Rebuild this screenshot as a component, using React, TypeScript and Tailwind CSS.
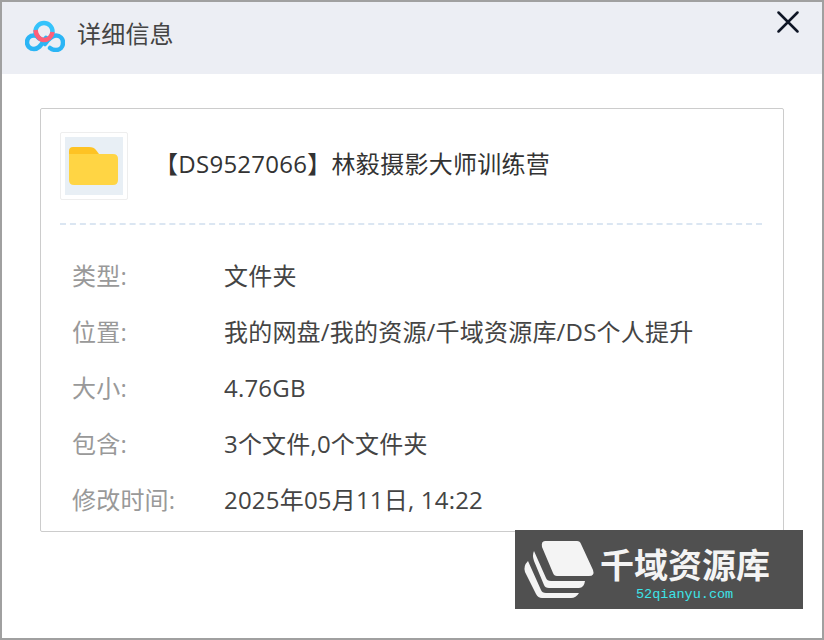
const font = '[font-family:"Open_Sans","Noto_Sans_CJK_SC",sans-serif]';

const rows = [
  { label: '类型:', value: '文件夹' },
  { label: '位置:', value: '我的网盘/我的资源/千域资源库/DS个人提升' },
  { label: '大小:', value: '4.76GB' },
  { label: '包含:', value: '3个文件,0个文件夹' },
  { label: '修改时间:', value: '2025年05月11日, 14:22' },
];

function CloudLogo() {
  return (
    <svg width="40" height="32" viewBox="0 0 40 32" fill="none" className="mb-[4px]">
      <circle cx="19" cy="11.500" r="8.500" stroke="#35c3fb" strokeWidth="4.500" />
      <path d="M21 18 C17 23 15 29 9 29 C5 29 2 26 2 22.500 C2 18 5 15.500 9 15.500 C11 15.500 13 16.500 14 18" stroke="#2bb5f5" strokeWidth="4.500" strokeLinecap="round" />
      <path d="M20 24 C23 20 26 15.500 31 15.500 C35 15.500 38 18.500 38 22.500 C38 27 35 30 31 30 C29 30 27 29.500 25 28" stroke="#2bb5f5" strokeWidth="4.500" strokeLinecap="round" />
      <path d="M10.500 10 C11 16 15 20 19 20 C23 20 27 17 27.500 12" stroke="#ff5f78" strokeWidth="4.500" />
    </svg>
  );
}

function FolderIcon() {
  return (
    <svg width="49" height="38" viewBox="0 0 49 38" className="mr-[2px]">
      <path d="M0 4 Q0 0 4 0 H20 Q25 0 27 3 L30 7 H0 Z" fill="#fec324" />
      <path d="M0 7 H44 Q49 7 49 12 V33 Q49 38 44 38 H5 Q0 38 0 33 Z" fill="#ffd544" />
    </svg>
  );
}

function Watermark() {
  return (
    <div className="absolute left-[513px] top-[528px] flex h-[79px] w-[288px] bg-[#505050]">
      <svg width="85" height="79" viewBox="0 0 85 79" className="shrink-0">
        <path d="M30 11 H62 Q65 11 66 14 L78 40 Q80 46 74 46 H42 Q39 46 38 43 L27 17 Q26 11 30 11 Z" fill="#f4f4f4" />
        <path d="M19 21 L31 48 Q32 51 36 51 H70 Q69 58 64 58 H34 Q30 58 29 55 L19 31 Q17 25 19 21 Z" fill="#f4f4f4" />
        <path d="M13 31 L26 60 Q27 63 31 63 H64 Q61 68 56 68 H27 Q23 68 21 64 L10 42 Q8 36 13 31 Z" fill="#f4f4f4" />
      </svg>
      <div className="flex flex-col">
        <div className="mt-[14px] font-['Noto_Sans_CJK_SC',sans-serif] text-[34px] leading-[40px] font-bold whitespace-nowrap text-[#f4f4f4]">千域资源库</div>
        <div className="mt-[3px] ml-[36px] font-['Liberation_Mono',monospace] text-[13.500px] leading-[16px] whitespace-nowrap text-[#3de4e8]">52qianyu.com</div>
      </div>
    </div>
  );
}

export default function App() {
  return (
    <div className={`relative h-[640px] w-[824px] overflow-hidden border-2 border-[#a0a0a0] bg-white ${font}`}>
      <div className="relative flex h-[72px] items-center bg-[#eceef4] pl-[23px]">
        <CloudLogo />
        <span className="mb-[8px] ml-[12px] text-[24px] leading-[32px] tracking-[0.2px] text-[#444]">详细信息</span>
        <svg className="absolute left-[775px] top-[9px]" width="22" height="22" viewBox="0 0 22 22" fill="none">
          <path d="M1.500 1.500 L20.500 20.500 M20.500 1.500 L1.500 20.500" stroke="#0f1626" strokeWidth="2.500" strokeLinecap="round" />
        </svg>
      </div>
      <div className="mx-[38px] mt-[34px] h-[424px] w-[744px] rounded-[2px] border border-[#ccc] pr-[21px] pl-[19px] pt-[23px]">
        <div className="flex items-center border-b-2 border-dashed border-[#dbe6f2] pb-[23px]">
          <div className="flex h-[68px] w-[68px] items-center justify-center rounded-[2px] border border-[#eeeeee] p-1">
            <div className="flex h-[58px] w-[58px] items-center justify-center bg-[#e8eff5]">
              <FolderIcon />
            </div>
          </div>
          <span className="mb-[4px] ml-[26px] text-[24px] leading-[32px] tracking-[0.27px] whitespace-nowrap text-[#333]">【DS9527066】林毅摄影大师训练营</span>
        </div>
        <div className="mt-[35px] flex flex-col gap-[24px] pl-[12px]">
          {rows.map(row => (
            <div key={row.label} className="flex h-[32px] items-center text-[24px] leading-[32px] tracking-[0.2px] whitespace-nowrap">
              <span className="w-[152px] text-[#999]">{row.label}</span>
              <span className="text-[#444]">{row.value}</span>
            </div>
          ))}
        </div>
      </div>
      <Watermark />
    </div>
  );
}
